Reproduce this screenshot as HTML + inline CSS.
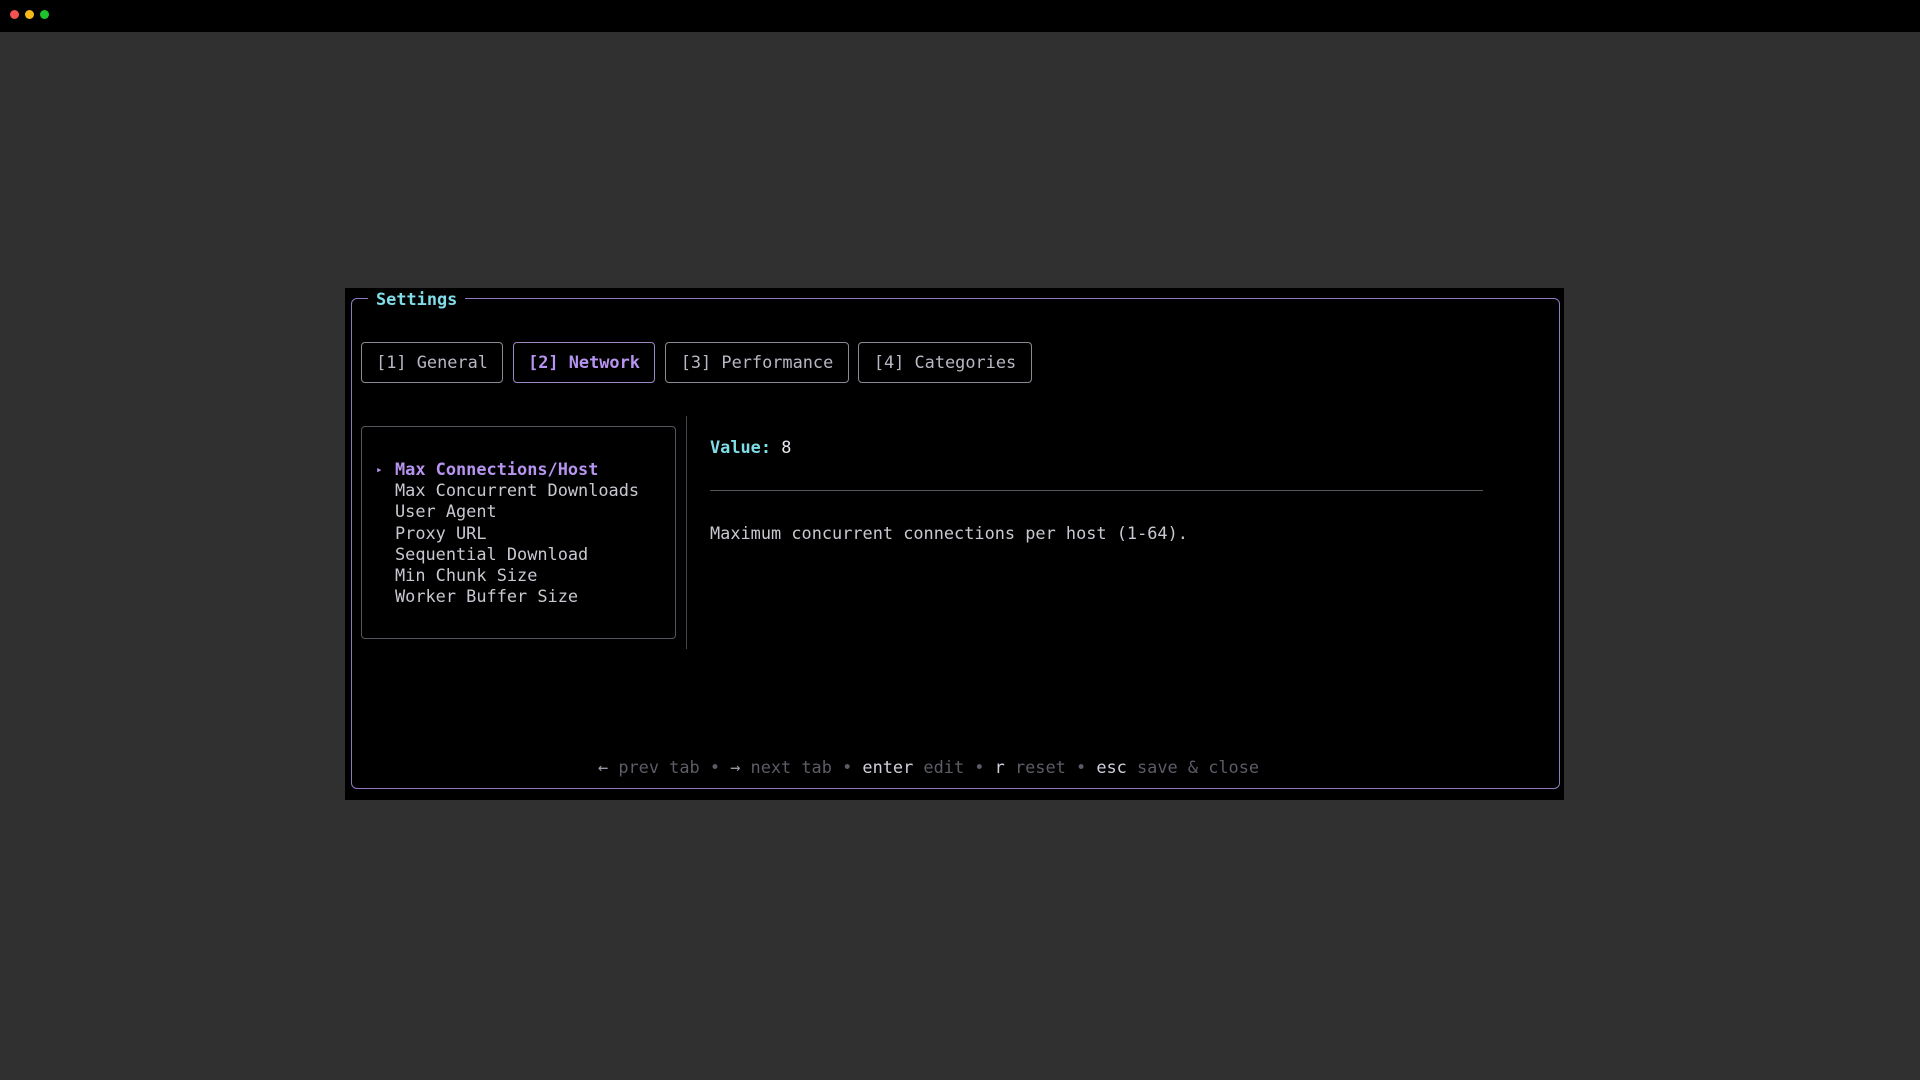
<!DOCTYPE html>
<html><head><meta charset="utf-8"><style>
*{margin:0;padding:0;box-sizing:border-box}
body{width:1920px;height:1080px;background:#303030;position:relative;overflow:hidden;font-family:"DejaVu Sans Mono","Liberation Mono",monospace;font-size:16.9px;color:#c8c8d0}
.top{position:absolute;left:0;top:0;width:1920px;height:32px;background:#000}
.dot{position:absolute;top:10px;width:9px;height:9px;border-radius:50%}
.win{position:absolute;left:345px;top:288px;width:1219px;height:512px;background:#000}
.frame{position:absolute;left:351px;top:298px;width:1209px;height:491px;border:1.5px solid #8f7ac0;border-radius:6px}
.title{position:absolute;left:368px;top:288px;padding:0 8px;background:#000;color:#7fdde8;font-weight:bold;line-height:22px}
.tab{position:absolute;top:342px;height:41px;border:1.5px solid #8a8a94;border-radius:4px;line-height:38px;text-align:center;color:#b8b8c4}
.tab.a{color:#b794f0;font-weight:bold;border-color:#9a88c0}
.t{position:absolute;white-space:pre;line-height:21.3px}
.list{position:absolute;left:361px;top:426px;width:315px;height:213px;border:1.5px solid #55555e;border-radius:4px}
</style></head><body>
<div class="top"></div>
<div class="dot" style="left:10px;background:#f25252"></div>
<div class="dot" style="left:25px;background:#f5b91a"></div>
<div class="dot" style="left:40px;background:#1fc32e"></div>
<div class="win"></div>
<div class="frame"></div>
<div class="title">Settings</div>
<div class="tab" style="left:361px;width:142px">[1] General</div>
<div class="tab a" style="left:513px;width:142px">[2] Network</div>
<div class="tab" style="left:665px;width:184px">[3] Performance</div>
<div class="tab" style="left:858px;width:174px">[4] Categories</div>
<div class="list"></div>
<div style="position:absolute;left:686px;top:416px;width:1px;height:233px;background:#44444c"></div>
<div class="t" style="left:376px;top:459px;color:#b794f0;font-size:11px">▸</div>
<div class="t" style="left:395px;top:459px;color:#b794f0;font-weight:bold">Max Connections/Host</div>
<div class="t" style="left:395px;top:480px">Max Concurrent Downloads
User Agent
Proxy URL
Sequential Download
Min Chunk Size
Worker Buffer Size</div>
<div class="t" style="left:710px;top:437px"><b style="color:#7fdde8">Value:</b> <span style="color:#e8e8ee">8</span></div>
<div style="position:absolute;left:710px;top:490px;width:773px;height:1px;background:#55555e"></div>
<div class="t" style="left:710px;top:523px">Maximum concurrent connections per host (1-64).</div>
<div class="t" style="left:598px;top:757px;color:#5c5c66"><span style="color:#9a9aa8">←</span> prev tab • <span style="color:#9a9aa8">→</span> next tab • <b style="color:#d0d0dc;font-weight:normal">enter</b> edit • <b style="color:#d0d0dc;font-weight:normal">r</b> reset • <b style="color:#d0d0dc;font-weight:normal">esc</b> save &amp; close</div>
</body></html>
